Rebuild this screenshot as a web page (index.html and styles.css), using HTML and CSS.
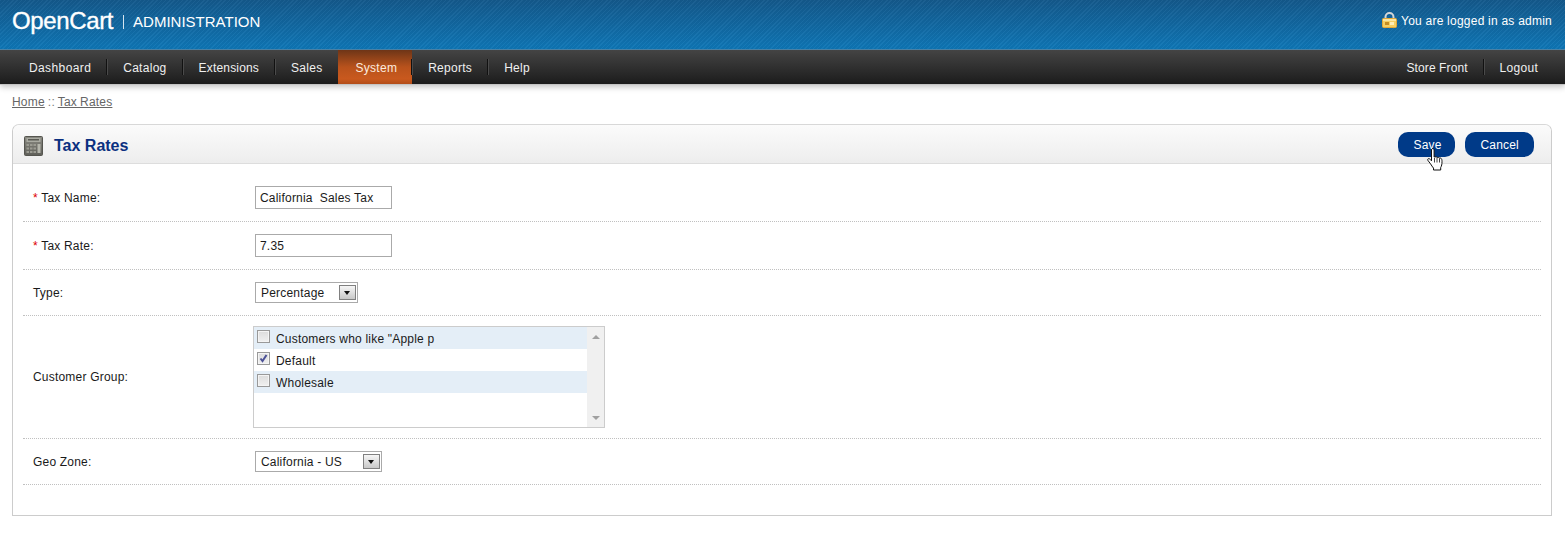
FILE: index.html
```html
<!DOCTYPE html>
<html lang="en">
<head>
<meta charset="utf-8">
<title>Tax Rates</title>
<link rel="stylesheet" href="styles.css">
</head>
<body>
<header class="top">
  <div class="logo"><span class="logo-name">OpenCart</span><span class="logo-sep"></span><span class="logo-sub">ADMINISTRATION</span></div>
  <div class="logged">
    <svg class="lock" width="15" height="16" viewBox="0 0 15 16"><path d="M3.500 8V5a4 4 0 0 1 8 0v3" fill="none" stroke="#d3d6d8" stroke-width="2"/><rect x="0.500" y="6.500" width="14" height="9" rx="1" fill="#f6cf62" stroke="#e3a93a"/><rect x="1" y="7" width="13" height="2" fill="#fbe6a2"/><rect x="3" y="10" width="4" height="3" fill="#c58d22"/><rect x="8" y="10" width="4" height="3" fill="#fdeeb8"/></svg>
    <span>You are logged in as admin</span>
  </div>
</header>
<nav class="menu">
  <ul class="menu-list">
    <li class="menu-item sep wide">Dashboard</li>
    <li class="menu-item sep">Catalog</li>
    <li class="menu-item sep narrow">Extensions</li>
    <li class="menu-item">Sales</li>
    <li class="menu-item active sep">System</li>
    <li class="menu-item sep">Reports</li>
    <li class="menu-item">Help</li>
  </ul>
  <ul class="menu-list">
    <li class="menu-item sep tight">Store Front</li>
    <li class="menu-item">Logout</li>
  </ul>
</nav>
<div class="breadcrumb"><a href="#">Home</a> :: <a href="#">Tax Rates</a></div>
<main class="box">
  <div class="box-head">
    <h1 class="box-title">
      <svg class="calc" width="19" height="20" viewBox="0 0 19 20"><defs><linearGradient id="calcBody" x1="0" y1="0" x2="0" y2="1"><stop offset="0" stop-color="#8a8a82"/><stop offset="1" stop-color="#5f5f59"/></linearGradient></defs><rect x="0.500" y="0.500" width="18" height="19" rx="1" fill="url(#calcBody)" stroke="#55554f"/><rect x="2.500" y="2" width="14" height="4" fill="#a9aaa1"/><rect x="4" y="3" width="11" height="1.500" fill="#5b5b55"/><g fill="#9b9b92"><rect x="2.500" y="8" width="2.500" height="2"/><rect x="6" y="8" width="2.500" height="2"/><rect x="9.500" y="8" width="2.500" height="2"/><rect x="2.500" y="11.500" width="2.500" height="2"/><rect x="6" y="11.500" width="2.500" height="2"/><rect x="9.500" y="11.500" width="2.500" height="2"/><rect x="2.500" y="15" width="2.500" height="2"/><rect x="6" y="15" width="2.500" height="2"/><rect x="9.500" y="15" width="2.500" height="2"/></g><rect x="13.500" y="8" width="3" height="9" fill="#b5b6ac"/></svg>
      <span>Tax Rates</span>
    </h1>
    <div class="actions">
      <a class="btn btn-save" href="#">Save
        <svg class="hand" width="17" height="23" viewBox="0 0 17 23"><path d="M4.500 1.300c.4-.9 2-.9 2.400 0 .2.400.2 1 .2 1.700V9l2-.2c.7 0 1 .3 1.100.8.800-.4 1.700-.2 2 .5.800-.3 1.800-.1 2.200.6.500.8.600 1.500.600 3 0 2.500-.4 4.300-1.300 5.800v2.500H6.500v-1.900c-1.100-1.200-2-2.800-3-4.300-.9-1.300-2.100-2.500-2.700-3.600-.5-1 .5-2 1.600-1.400.8.500 1.500 1.200 2.100 2V3c0-.6 0-1.200 0-1.700z" fill="#fff" stroke="#111" stroke-width="1"/><path d="M7.500 10v4.500M10 10v4.500M12.500 10.500v4" stroke="#111" stroke-width=".8" fill="none"/></svg>
      </a>
      <a class="btn" href="#">Cancel</a>
    </div>
  </div>
  <form class="form">
    <div class="row">
      <label class="field-label"><span class="req">*</span> Tax Name:</label>
      <input class="text" type="text" value="California  Sales Tax">
    </div>
    <div class="row">
      <label class="field-label"><span class="req">*</span> Tax Rate:</label>
      <input class="text" type="text" value="7.35">
    </div>
    <div class="row">
      <label class="field-label">Type:</label>
      <div class="select type-select"><span>Percentage</span><span class="arrow"></span></div>
    </div>
    <div class="row row-list">
      <label class="field-label">Customer Group:</label>
      <div class="scrollbox">
        <div class="scroll-items">
          <div class="item odd"><span class="check"></span><span class="item-text">Customers who like "Apple p</span></div>
          <div class="item"><span class="check"><svg width="11" height="11" viewBox="0 0 11 11"><path d="M2.500 5.500l2 2.500L8.500 2" fill="none" stroke="#4c5196" stroke-width="2"/></svg></span><span class="item-text">Default</span></div>
          <div class="item odd"><span class="check"></span><span class="item-text">Wholesale</span></div>
        </div>
        <div class="scrollbar"><span class="up"></span><span class="down"></span></div>
      </div>
    </div>
    <div class="row">
      <label class="field-label">Geo Zone:</label>
      <div class="select zone-select"><span>California - US</span><span class="arrow"></span></div>
    </div>
  </form>
</main>
</body>
</html>
```

FILE: styles.css
```css
* { box-sizing: border-box; }
html, body { margin: 0; padding: 0; }
body {
  font-family: "Liberation Sans", Arial, sans-serif;
  font-size: 12px;
  letter-spacing: .2px;
  color: #1a1a1a;
  background: #fff;
  height: 557px;
  overflow: hidden;
}
.top {
  height: 50px;
  display: flex;
  justify-content: space-between;
  align-items: center;
  padding: 0 13px 8px 12px;
  color: #fff;
  border-bottom: 1px solid #4d86ab;
  background:
    repeating-linear-gradient(135deg, rgba(255,255,255,.035) 0 1px, rgba(0,0,0,.035) 1px 3px),
    linear-gradient(#14598c, #0f77b7);
}
.logo { display: flex; align-items: center; }
.logo-name { font-size: 24px; line-height: 28px; letter-spacing: -0.37px; -webkit-text-stroke: .35px #fff; }
.logo-sep { width: 1px; height: 14px; background: #d5e5f0; margin: 2px 9px 0 10px; }
.logo-sub { font-size: 15px; letter-spacing: 0; margin-top: 1px; }
.logged { display: flex; align-items: center; gap: 4px; letter-spacing: .23px; }
.lock { display: block; margin-top: -1px; }
.menu {
  height: 34px;
  display: flex;
  justify-content: space-between;
  padding: 0 11px 0 13px;
  background: linear-gradient(#444444, #1c1c1c);
  box-shadow: 0 1px 0 #c4c4c4, 0 3px 6px rgba(0,0,0,.24);
  position: relative;
}
.menu-list { list-style: none; margin: 0; padding: 0; display: flex; }
.menu-item {
  color: #f0f0f0;
  line-height: 36px;
  height: 34px;
  padding: 0 16px;
  letter-spacing: .28px;
  position: relative;
}
.menu-item.tight { letter-spacing: .1px; }
.menu-item.wide { letter-spacing: .39px; }
.menu-item.narrow { letter-spacing: .18px; }
.menu-item.sep::after {
  content: "";
  position: absolute;
  right: 0;
  top: 9px;
  height: 16px;
  width: 1px;
  background: #111;
  box-shadow: 1px 0 0 #4a4a4a;
}
.menu-item.active {
  color: #fbeadf;
  padding: 0 15px 0 17px;
  background: linear-gradient(#6e3517, #b8521c 50%, #c9591e 85%, #b24c18);
}
.breadcrumb { padding: 11px 12px 0; height: 40px; color: #7a7a7a; line-height: 14px; word-spacing: -.5px; }
.breadcrumb a { color: #666; }
.box {
  margin: 0 13px 0 12px;
  height: 392px;
  border: 1px solid #ccc;
  border-radius: 7px 7px 0 0;
  border-top-color: #d8d8d8;
}
.box-head {
  height: 39px;
  display: flex;
  justify-content: space-between;
  align-items: center;
  padding: 0 17px 0 11px;
  border-bottom: 1px solid #ddd;
  border-radius: 7px 7px 0 0;
  background: linear-gradient(#fbfbfb, #ededed);
}
.box-title { margin: 0; display: flex; align-items: center; gap: 11px; font-size: 16px; font-weight: bold; letter-spacing: 0; color: #0b3080; }
.box-title span { margin-top: 3px; }
.calc { display: block; margin-top: 3px; }
.actions { display: flex; gap: 10px; }
.btn {
  position: relative;
  display: block;
  height: 25px;
  line-height: 27px;
  padding: 0 15px;
  border-radius: 10px;
  background: #003a88;
  color: #fff;
  text-decoration: none;
}
.btn-save { padding: 0 15px 0 15px; width: 57px; }
.hand { position: absolute; left: 29px; top: 16px; }
.form { padding: 10px 10px 0; }
.row {
  display: flex;
  align-items: center;
  padding: 12px 0;
  border-bottom: 1px dotted #c0c0c0;
}
.row-list { padding: 10px 0; }
.field-label { width: 232px; flex: none; padding-left: 10px; }
.req { color: #d00; }
.text {
  width: 137px;
  height: 23px;
  margin: 0;
  padding: 0 4px;
  border: 1px solid #aaa;
  font: 12px "Liberation Sans", Arial, sans-serif;
  letter-spacing: .2px;
  color: #1a1a1a;
  background: #fff;
}
.select {
  height: 21px;
  display: flex;
  align-items: center;
  justify-content: space-between;
  padding: 0 1px 0 5px;
  border: 1px solid #aaa;
  background: #fff;
}
.type-select { width: 103px; }
.zone-select { width: 127px; }
.arrow {
  width: 17px;
  height: 15px;
  border: 1px solid #808080;
  background: linear-gradient(#f6f6f6, #c8c8c8);
  position: relative;
}
.arrow::after {
  content: "";
  position: absolute;
  left: 4px;
  top: 5px;
  border: 3.5px solid transparent;
  border-top: 4px solid #111;
  border-bottom: 0;
}
.scrollbox {
  width: 352px;
  height: 102px;
  margin-left: -2px;
  display: flex;
  border: 1px solid #ccc;
  background: #fff;
}
.scroll-items { flex: 1; }
.item { height: 22px; display: flex; align-items: center; gap: 6px; padding-left: 3px; }
.item-text { margin-top: 2px; }
.item.odd { background: #e4eef7; }
.check {
  width: 13px;
  height: 13px;
  flex: none;
  margin-top: -4px;
  border: 1px solid #999;
  box-shadow: inset 0 0 0 1px #f4f4f4;
  background: linear-gradient(#dcdcdc, #f0f0f0);
  display: block;
}
.check svg { display: block; }
.scrollbar {
  width: 17px;
  background: #f0f0f0;
  display: flex;
  flex-direction: column;
  justify-content: space-between;
  align-items: center;
  padding: 8px 0 7px;
}
.up { border: 4px solid transparent; border-bottom: 4px solid #a0a0a0; border-top: 0; }
.down { border: 4px solid transparent; border-top: 4px solid #a0a0a0; border-bottom: 0; }
```
